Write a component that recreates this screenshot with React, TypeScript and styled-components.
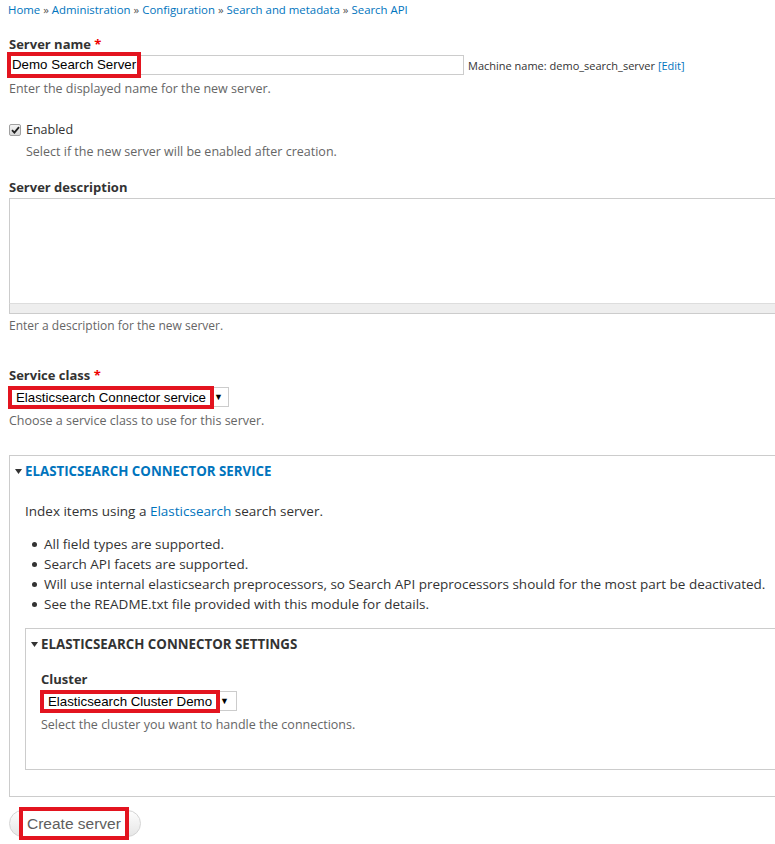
import React from "react";
import styled, { createGlobalStyle } from "styled-components";

const Global = createGlobalStyle`
  html, body { margin: 0; padding: 0; background: #fff; overflow-x: hidden; }
  body { font-family: "Open Sans", "DejaVu Sans", sans-serif; color: #333; }
`;

const Page = styled.div`
  padding-left: 9px;
  box-sizing: border-box;
  overflow: hidden;
`;

const Breadcrumb = styled.div`
  margin-left: -1px;
  font-size: 11.4px;
  line-height: 20px;
  color: #555;
`;

const Link = styled.a`
  color: #0074bd;
  text-decoration: none;
`;

const Sep = styled.span`
  color: #555;
  margin: 0 3px;
`;

const Label = styled.div<{ $top: number }>`
  margin-top: ${(p) => p.$top}px;
  font-size: 13px;
  font-weight: 700;
  line-height: 18px;
  color: #333;
`;

const Req = styled.span`
  color: #e00;
`;

const Desc = styled.div<{ $top: number; $indent?: number; $narrow?: boolean }>`
  margin-top: ${(p) => p.$top}px;
  margin-left: ${(p) => p.$indent ?? 0}px;
  font-size: ${(p) => (p.$narrow ? 12 : 12.5)}px;
  line-height: 16px;
  color: #666;
`;

const InputRow = styled.div`
  margin-top: 2px;
  display: flex;
  align-items: center;
  gap: 4px;
`;

const TextInput = styled.div`
  box-sizing: border-box;
  width: 455px;
  height: 20px;
  border: 1px solid #ccc;
  padding-left: 1px;
  display: flex;
  align-items: center;
  font-family: "Liberation Sans", Arial, sans-serif;
  font-size: 13.3px;
  color: #000;
`;

const Marked = styled.span<{ $pad: string; $h: number }>`
  display: inline-block;
  padding: ${(p) => p.$pad};
  height: ${(p) => p.$h}px;
  line-height: ${(p) => p.$h}px;
  outline: 4px solid #e3141f;
  background: #fff;
`;

const MachineName = styled.span`
  font-size: 11px;
  color: #333;
`;

const CheckRow = styled.div`
  margin-top: 24px;
  display: flex;
  align-items: center;
  gap: 5px;
  font-size: 12.5px;
  line-height: 18px;
  color: #333;
`;

const CheckBox = styled.span`
  box-sizing: border-box;
  width: 12px;
  height: 12px;
  border: 1px solid #a0a0a0;
  border-radius: 2px;
  background: linear-gradient(#f4f4f4, #d8d8d8);
  display: inline-flex;
  align-items: center;
  justify-content: center;
`;

const TextArea = styled.div`
  margin-top: 2px;
  border: 1px solid #ccc;
  border-right: none;
  border-bottom: none;
  height: 104px;
  background: #fff;
`;

const Grippie = styled.div`
  height: 9px;
  background: #eee;
  border: 1px solid #ccc;
  border-right: none;
  border-top-color: #ddd;
`;

const Select = styled.div<{ $w: number }>`
  margin-top: 3px;
  box-sizing: border-box;
  width: ${(p) => p.$w}px;
  height: 20px;
  border: 1px solid #ccc;
  padding-left: 2px;
  display: flex;
  align-items: center;
  font-family: "Liberation Sans", Arial, sans-serif;
  font-size: 13.3px;
  color: #000;
`;

const Arrow = styled.span`
  margin-left: 4px;
  font-size: 9px;
  color: #000;
`;

const Fieldset = styled.div<{ $top: number; $pb: number }>`
  margin-top: ${(p) => p.$top}px;
  border: 1px solid #ccc;
  border-right: none;
  padding: 6px 0 ${(p) => p.$pb}px 15px;
`;

const Legend = styled.div<{ $blue?: boolean }>`
  margin-left: -10px;
  font-size: 13.3px;
  font-weight: 700;
  line-height: 18px;
  text-transform: uppercase;
  color: ${(p) => (p.$blue ? "#0074bd" : "#333")};
  display: flex;
  align-items: center;
  gap: 3px;
`;

const Caret = styled.svg`
  width: 7px;
  height: 5px;
  flex: none;
`;

const Para = styled.div`
  margin-top: 22px;
  font-size: 13.5px;
  line-height: 18px;
  color: #333;
`;

const List = styled.ul`
  margin: 14px 0 0;
  padding-left: 19px;
  font-size: 13.5px;
  line-height: 20px;
  color: #333;
  list-style: none;
  white-space: nowrap;
`;

const Item = styled.li`
  position: relative;
  &::before {
    content: "";
    position: absolute;
    left: -12px;
    top: 8px;
    width: 5px;
    height: 5px;
    border-radius: 50%;
    background: #333;
  }
`;

const Button = styled.button`
  margin: 13px 0 8px;
  box-sizing: border-box;
  height: 27px;
  border: 1px solid #d4d4d4;
  border-radius: 14px;
  background: linear-gradient(#fdfdfd, #e6e6e6);
  padding: 0 15px 0 13px;
  display: flex;
  align-items: flex-start;
  overflow: visible;
  font-family: "Liberation Sans", Arial, sans-serif;
  font-size: 15.5px;
  color: #5e5e5e;
`;

const CaretIcon = () => (
  <Caret viewBox="0 0 7 5">
    <path d="M0 0 L7 0 L3.5 5 Z" fill="#333" />
  </Caret>
);

export default function App() {
  return (
    <>
      <Global />
      <Page>
        <Breadcrumb>
          <Link href="#">Home</Link>
          <Sep>»</Sep>
          <Link href="#">Administration</Link>
          <Sep>»</Sep>
          <Link href="#">Configuration</Link>
          <Sep>»</Sep>
          <Link href="#">Search and metadata</Link>
          <Sep>»</Sep>
          <Link href="#">Search API</Link>
        </Breadcrumb>

        <Label $top={15}>
          Server name <Req>*</Req>
        </Label>
        <InputRow>
          <TextInput>
            <Marked $pad="0 1px" $h={18}>Demo Search Server</Marked>
          </TextInput>
          <MachineName>
            Machine name: demo_search_server <Link href="#">[Edit]</Link>
          </MachineName>
        </InputRow>
        <Desc $top={6}>Enter the displayed name for the new server.</Desc>

        <CheckRow>
          <CheckBox>
            <svg width="9" height="8" viewBox="0 0 9 8">
              <path d="M1 4.2 L3.4 6.6 L8 1.2" stroke="#222" strokeWidth="1.8" fill="none" />
            </svg>
          </CheckBox>
          Enabled
        </CheckRow>
        <Desc $top={5} $indent={17}>Select if the new server will be enabled after creation.</Desc>

        <Label $top={18}>Server description</Label>
        <TextArea />
        <Grippie />
        <Desc $top={4} $narrow>Enter a description for the new server.</Desc>

        <Label $top={32}>
          Service class <Req>*</Req>
        </Label>
        <Select $w={220}>
          <Marked $pad="0 4px" $h={15}>Elasticsearch Connector service</Marked>
          <Arrow>▼</Arrow>
        </Select>
        <Desc $top={6}>Choose a service class to use for this server.</Desc>

        <Fieldset $top={26} $pb={26}>
          <Legend $blue>
            <CaretIcon />
            Elasticsearch Connector Service
          </Legend>
          <Para>
            Index items using a <Link href="#">Elasticsearch</Link> search server.
          </Para>
          <List>
            <Item>All field types are supported.</Item>
            <Item>Search API facets are supported.</Item>
            <Item>
              Will use internal elasticsearch preprocessors, so Search API preprocessors should for the most part be deactivated.
            </Item>
            <Item>See the README.txt file provided with this module for details.</Item>
          </List>

          <Fieldset $top={14} $pb={36}>
            <Legend>
              <CaretIcon />
              Elasticsearch Connector Settings
            </Legend>
            <Label $top={17}>Cluster</Label>
            <Select $w={196}>
              <Marked $pad="0 4px" $h={15}>Elasticsearch Cluster Demo</Marked>
              <Arrow>▼</Arrow>
            </Select>
            <Desc $top={6}>Select the cluster you want to handle the connections.</Desc>
          </Fieldset>
        </Fieldset>

        <Button type="button">
          <Marked $pad="0 4px" $h={25}>Create server</Marked>
        </Button>
      </Page>
    </>
  );
}
